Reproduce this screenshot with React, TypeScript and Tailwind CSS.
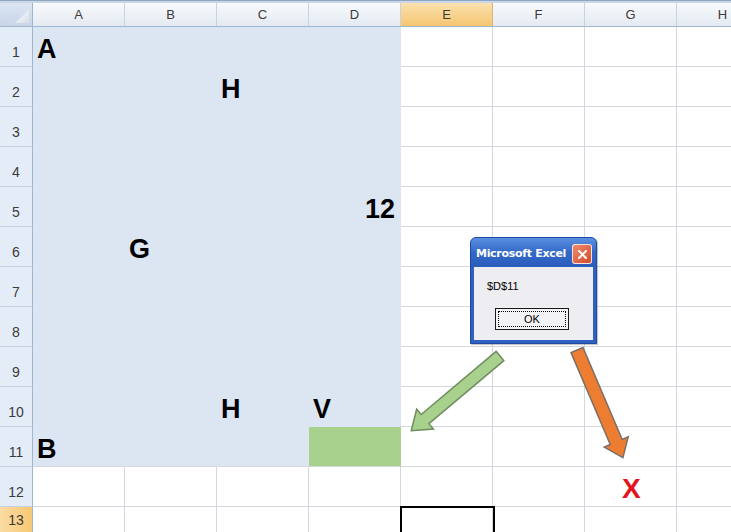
import React from 'react';

const COLS = ['A', 'B', 'C', 'D', 'E', 'F', 'G', 'H'];
const ROWS = Array.from({ length: 13 }, (_, i) => i + 1);

// cell contents, keyed by address
const values: Record<string, { text: string; align?: 'left' | 'right' }> = {
  A1: { text: 'A' },
  C2: { text: 'H' },
  D5: { text: '12', align: 'right' },
  B6: { text: 'G' },
  C10: { text: 'H' },
  D10: { text: 'V' },
  A11: { text: 'B' },
};

const Arrow: React.FC<{
  x: number;
  y: number;
  angle: number;
  length: number;
  shaft: number;
  head: number;
  headLen: number;
  fill: string;
  stroke: string;
}> = ({ x, y, angle, length, shaft, head, headLen, fill, stroke }) => {
  const b = length - headLen;
  const pts = [
    [0, -shaft],
    [b, -shaft],
    [b, -head],
    [length, 0],
    [b, head],
    [b, shaft],
    [0, shaft],
  ]
    .map((p) => p.join(','))
    .join(' ');
  return (
    <polygon
      points={pts}
      transform={`translate(${x} ${y}) rotate(${angle})`}
      fill={fill}
      stroke={stroke}
      strokeWidth={1.5}
    />
  );
};

export default function App() {
  return (
    <div
      className="relative w-[731px] h-[532px] overflow-hidden bg-white"
      style={{ fontFamily: '"Liberation Sans", Arial, sans-serif' }}
    >
      {/* top strip */}
      <div className="h-[3px] bg-[#c9d6e6] border-t border-[#8fa6c2]" />

      {/* column headers */}
      <div className="flex h-[24px] border-b border-[#9eb6ce]">
        <div className="w-[33px] shrink-0 border-r border-[#9eb6ce] bg-gradient-to-b from-[#dbe5f2] to-[#c8d6e8] relative">
          <svg className="absolute right-[3px] bottom-[3px]" width="14" height="13" viewBox="0 0 14 13">
            <defs>
              <linearGradient id="tri" x1="0" y1="0" x2="1" y2="1">
                <stop offset="0" stopColor="#ffffff" />
                <stop offset="1" stopColor="#d7dde6" />
              </linearGradient>
            </defs>
            <polygon points="14,0 14,13 0,13" fill="url(#tri)" />
          </svg>
        </div>
        {COLS.map((c) => (
          <div
            key={c}
            className={
              c === 'E'
                ? 'w-[92px] shrink-0 border-r border-[#d9b672] bg-gradient-to-b from-[#fbe1ae] to-[#f5c570] flex items-center justify-center text-[13px] text-[#3a3a3a]'
                : 'w-[92px] shrink-0 border-r border-[#c9d3df] bg-gradient-to-b from-[#f8fafc] to-[#e4eaf2] flex items-center justify-center text-[13px] text-[#3a3a3a]'
            }
          >
            {c}
          </div>
        ))}
      </div>

      {/* grid rows */}
      {ROWS.map((r) => (
        <div key={r} className={r === 13 ? 'flex h-[26px]' : 'flex h-[40px]'}>
          <div
            className={
              r === 13
                ? 'w-[33px] shrink-0 border-r border-b border-[#9eb6ce] bg-gradient-to-r from-[#fbdca4] to-[#f6c873] flex items-end justify-center pb-[5px] text-[14px] text-[#3a3a3a] leading-none'
                : 'w-[33px] shrink-0 border-r border-b border-[#9eb6ce] border-b-[#c5d1df] bg-[#e4ecf7] flex items-end justify-center pb-[7px] text-[14px] text-[#3a3a3a] leading-none'
            }
          >
            {r}
          </div>
          {COLS.map((c, ci) => {
            const addr = `${c}${r}`;
            const selected = r <= 11 && ci <= 3;
            const green = addr === 'D11';
            const v = values[addr];
            let cls = 'w-[92px] shrink-0 border-r border-b flex items-end pb-[3px] text-[27px] font-bold leading-none ';
            if (green) cls += 'bg-[#a9d18e] border-[#a9d18e] ';
            else if (selected) cls += 'bg-[#dce6f2] border-[#dce6f2] ';
            else cls += 'bg-white border-[#d4d8de] ';
            if (addr === 'D11' || (r === 11 && ci < 3)) cls += 'border-b-[#d4d8de] ';
            cls += v?.align === 'right' ? 'justify-end pr-[5px]' : 'justify-start pl-[4px]';
            return (
              <div key={addr} className={cls}>
                {addr === 'G12' ? (
                  <span className="pl-[33px] text-[28px] text-[#e3141b]">X</span>
                ) : (
                  v && <span className="text-black">{v.text}</span>
                )}
              </div>
            );
          })}
        </div>
      ))}

      {/* active cell */}
      <div className="absolute left-[400px] top-[506px] w-[95px] h-[30px] border-2 border-black" />

      {/* arrows */}
      <svg className="absolute inset-0 pointer-events-none" width="731" height="532">
        <Arrow x={500} y={356} angle={139.9} length={116} shaft={6} head={13} headLen={18} fill="#a9d18e" stroke="#6f8d5e" />
        <Arrow x={577} y={350} angle={66.9} length={117} shaft={6.5} head={13} headLen={17} fill="#ed7d31" stroke="#7a6f68" />
      </svg>

      {/* message box */}
      <div className="absolute left-[470px] top-[237px] w-[127px] h-[107px] rounded-t-[6px] bg-[#2f62c0] border border-[#1d4aa0] flex flex-col shadow-[1px_1px_1px_rgba(0,0,0,0.25)]">
        <div className="h-[29px] shrink-0 rounded-t-[5px] bg-gradient-to-b from-[#5b8fe0] via-[#3468c8] to-[#2a5cbc] flex items-center justify-between pl-[5px] pr-[4px] pt-[3px]">
          <span
            className="text-white font-bold tracking-[-0.3px]"
            style={{ fontFamily: '"DejaVu Sans", "Liberation Sans", sans-serif', fontSize: '11px' }}
          >
            Microsoft Excel
          </span>
          <div className="w-[20px] h-[20px] rounded-[3px] border border-white/80 bg-gradient-to-br from-[#ef8a6c] to-[#d4482a] flex items-center justify-center">
            <svg width="11" height="11" viewBox="0 0 11 11">
              <path d="M2 2 L9 9 M9 2 L2 9" stroke="white" strokeWidth="2" strokeLinecap="round" />
            </svg>
          </div>
        </div>
        <div className="flex-1 mx-[3px] mb-[3px] bg-[#eeedf1] flex flex-col">
          <div className="pl-[13px] pt-[14px] text-[11px] text-black leading-none">$D$11</div>
          <div className="mt-[16px] ml-[21px] w-[74px] h-[22px] border border-[#1b1b1b] bg-[#f3f2f5] p-[2px]">
            <div className="w-full h-full border border-dotted border-black flex items-center justify-center text-[11px] text-black leading-none">
              OK
            </div>
          </div>
        </div>
      </div>
    </div>
  );
}
